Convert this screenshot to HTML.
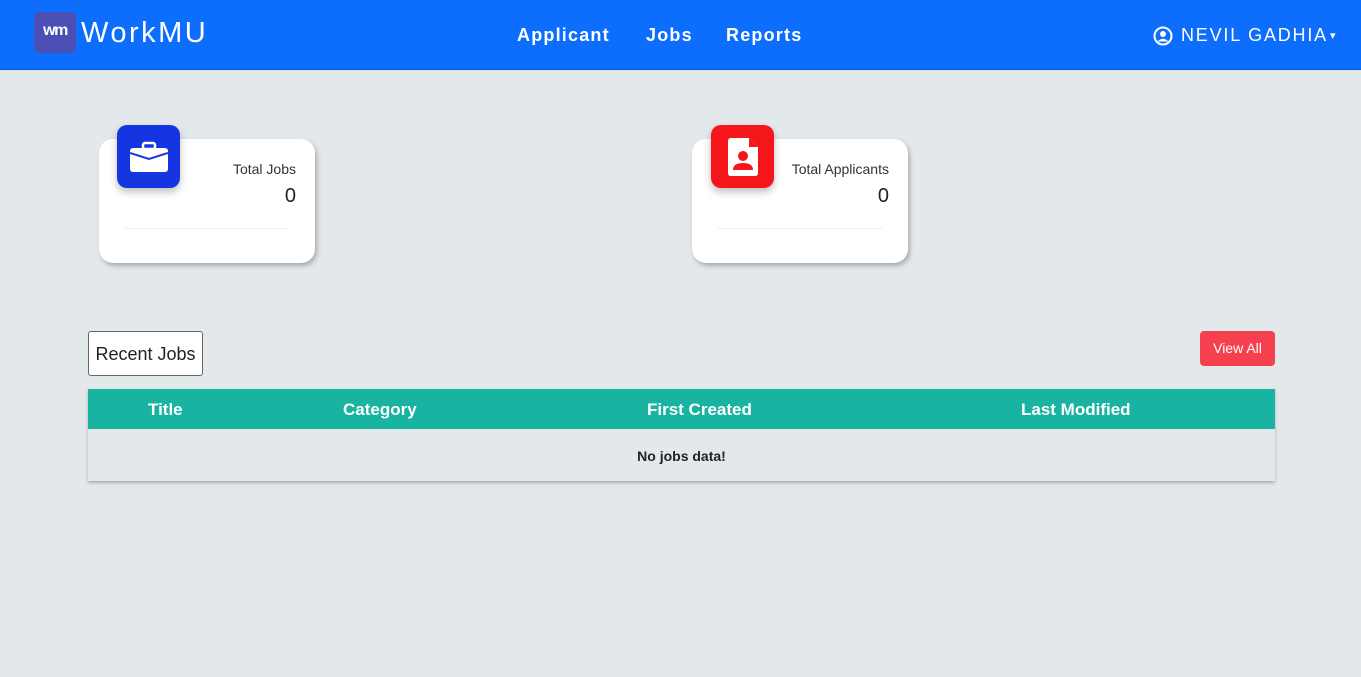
<!DOCTYPE html>
<html><head><meta charset="utf-8"><style>
*{box-sizing:border-box;margin:0;padding:0}
body{width:1361px;height:677px;background:#e3e8eb;font-family:"Liberation Sans",sans-serif;position:relative;overflow:hidden}
.nav{position:absolute;left:0;top:0;width:1361px;height:70px;background:#0d6efd;border-bottom:1px solid #0a58ca}
.logo{position:absolute;left:34px;top:12px;width:42px;height:41px;background:#4b4fb4;border-radius:5px;color:#fff;font-weight:bold;font-size:16px;line-height:38px;text-align:center;letter-spacing:-1.5px}
.brand{position:absolute;left:81px;top:17px;color:#fff;font-size:29px;letter-spacing:2.5px}
.links a{position:absolute;top:25px;color:#fff;font-weight:bold;font-size:18px;letter-spacing:1.2px;text-decoration:none}
.user{position:absolute;left:1153px;top:25px;color:#fff;font-size:18px;letter-spacing:1.8px;display:flex;align-items:center;gap:8px}
.card{position:absolute;top:139px;width:216px;height:124px;background:#fff;border-radius:14px;box-shadow:2px 3px 5px rgba(0,0,0,.25)}
.card .line{position:absolute;left:25px;right:25px;top:89px;height:1px;background:#f0f0f0}
.ic{position:absolute;top:125px;width:63px;height:63px;border-radius:10px;box-shadow:0 4px 8px rgba(0,0,0,.25);display:flex;align-items:center;justify-content:center}
.lbl{position:absolute;right:19px;top:22px;font-size:14px;color:#333}
.num{position:absolute;right:19px;top:46px;font-size:20px;color:#222}
.rj{position:absolute;left:88px;top:331px;width:115px;height:45px;border:1px solid #666;border-radius:3px;background:#fff;font-size:18px;color:#222;line-height:45px;text-align:center}
.va{position:absolute;left:1200px;top:331px;width:75px;height:35px;background:#f5414f;color:#fff;border-radius:4px;font-size:14px;line-height:35px;text-align:center}
.tbl{position:absolute;left:88px;top:389px;width:1187px;height:92px;box-shadow:0 2px 3px rgba(0,0,0,.25)}
.th{height:40px;background:#19b3a2;position:relative;color:#fff;font-weight:bold;font-size:17px}
.th span{position:absolute;top:11px}
.td{height:52px;text-align:center;line-height:54px;font-weight:bold;font-size:14px;color:#222}
</style></head><body>
<div class="nav">
<div class="logo">wm</div><div class="brand">WorkMU</div>
<div class="links"><a style="left:517px">Applicant</a><a style="left:646px">Jobs</a><a style="left:726px">Reports</a></div>
<div class="user"><svg width="20" height="20" viewBox="0 0 20 20"><circle cx="10" cy="10" r="8.5" fill="none" stroke="#fff" stroke-width="2"/><circle cx="10" cy="8" r="3" fill="#fff"/><path d="M4.5 15.5Q10 10 15.5 15.5" fill="#fff"/></svg>NEVIL GADHIA<span style="font-size:11px;margin-left:-6px">▾</span></div>
</div>
<div class="card" style="left:99px"><div class="lbl">Total Jobs</div><div class="num">0</div><div class="line"></div></div>
<div class="ic" style="left:117px;background:#1535e0"><svg width="38" height="32" viewBox="0 0 38 32"><rect x="13" y="2" width="12" height="6" rx="2" fill="none" stroke="#fff" stroke-width="2.5"/><rect x="0" y="7" width="38" height="24" rx="3" fill="#fff"/><path d="M0 12L19 18L38 12" fill="none" stroke="#1535e0" stroke-width="2"/></svg></div>
<div class="card" style="left:692px"><div class="lbl">Total Applicants</div><div class="num">0</div><div class="line"></div></div>
<div class="ic" style="left:711px;background:#f5161c"><svg width="30" height="38" viewBox="0 0 30 38"><path d="M3 0H21L30 9V35Q30 38 27 38H3Q0 38 0 35V3Q0 0 3 0Z" fill="#fff"/><path d="M21 0V9H30" fill="#f5161c"/><circle cx="15" cy="18" r="5" fill="#f5161c"/><path d="M5 32Q5 25 15 25Q25 25 25 32Z" fill="#f5161c"/></svg></div>
<div class="rj">Recent Jobs</div>
<div class="va">View All</div>
<div class="tbl"><div class="th"><span style="left:60px">Title</span><span style="left:255px">Category</span><span style="left:559px">First Created</span><span style="left:933px">Last Modified</span></div><div class="td">No jobs data!</div></div>
</body></html>
